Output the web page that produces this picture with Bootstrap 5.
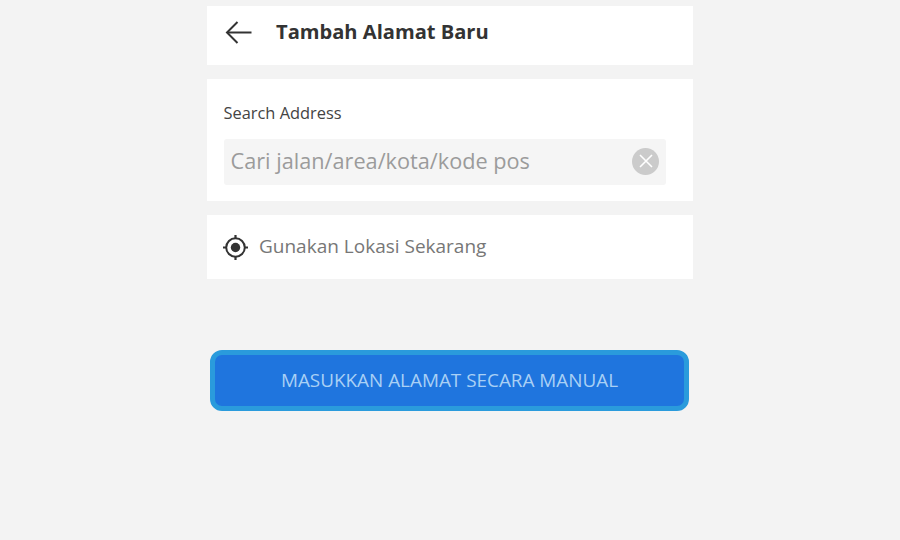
<!DOCTYPE html>
<html lang="id">
<head>
<meta charset="utf-8">
<title>Tambah Alamat Baru</title>
<link rel="stylesheet" href="https://cdn.jsdelivr.net/npm/bootstrap@5.3.0/dist/css/bootstrap.min.css">
<style>
html,body{height:540px;overflow:hidden}
body{background:#f3f3f3;font-family:"Open Sans","Noto Sans",sans-serif;color:#333}
.shell{width:486px;padding-top:6px}
.head-bar{height:59px;padding:0 0 8px 18px;gap:23px}
.head-title{font-size:20.100px;font-weight:700;color:#333;line-height:27px;margin:0}
.search-card{height:122px;margin-top:14px;padding:23px 27px 0 16.5px}
.search-label{font-size:16.400px;line-height:22px;color:#444;margin:0 0 15px}
.search-box{height:46px;background:#f5f5f5;border-radius:3px;padding:0 7px 2px;justify-content:space-between}
.search-ph{font-size:21.700px;color:#9b9b9b}
.clear-dot{width:27px;height:27px;border-radius:50%;background:#cbcbcb}
.loc-row{height:64px;margin-top:14px;padding:0 0 2px 16px;gap:11px}
.loc-text{font-size:19px;color:#777}
.manual-wrap{padding:71px 4px 0 3px}
.manual-btn{height:61px;width:479px;background:#1f75de;border:5px solid #2a9bdc;border-radius:12px;color:#a9d0f5;font-size:18.900px;padding:0}
.manual-btn:hover{background:#1f75de;border-color:#2a9bdc;color:#a9d0f5}
</style>
</head>
<body>
<div class="shell mx-auto">
  <div class="head-bar bg-white d-flex align-items-center">
    <svg width="28" height="24" viewBox="0 0 28 24" fill="none" stroke="#333" stroke-width="2" aria-hidden="true"><path d="M26.500 12.500H3"/><path d="M12.500 2 2 12.500 12.500 23"/></svg>
    <h1 class="head-title">Tambah Alamat Baru</h1>
  </div>
  <div class="search-card bg-white">
    <p class="search-label">Search Address</p>
    <div class="search-box d-flex align-items-center">
      <span class="search-ph">Cari jalan/area/kota/kode pos</span>
      <span class="clear-dot d-flex align-items-center justify-content-center">
        <svg width="14" height="14" viewBox="0 0 14 14" fill="none" stroke="#fff" stroke-width="1.600" aria-hidden="true"><path d="M1 1 13 13M13 1 1 13"/></svg>
      </span>
    </div>
  </div>
  <div class="loc-row bg-white d-flex align-items-center">
    <svg width="25" height="27" viewBox="0 0 25 27" fill="none" stroke="#333" aria-hidden="true"><circle cx="12.500" cy="14.500" r="9.300" stroke-width="2"/><circle cx="12.500" cy="14.500" r="4.700" fill="#333" stroke="none"/><path stroke-width="2.200" d="M12.500 2v3.500M12.500 23.500V27M0 14.500h3.500M21.500 14.500H25"/></svg>
    <span class="loc-text">Gunakan Lokasi Sekarang</span>
  </div>
  <div class="manual-wrap">
    <button type="button" class="btn manual-btn d-block">MASUKKAN ALAMAT SECARA MANUAL</button>
  </div>
</div>
<script src="https://cdn.jsdelivr.net/npm/bootstrap@5.3.0/dist/js/bootstrap.bundle.min.js"></script>
</body>
</html>
